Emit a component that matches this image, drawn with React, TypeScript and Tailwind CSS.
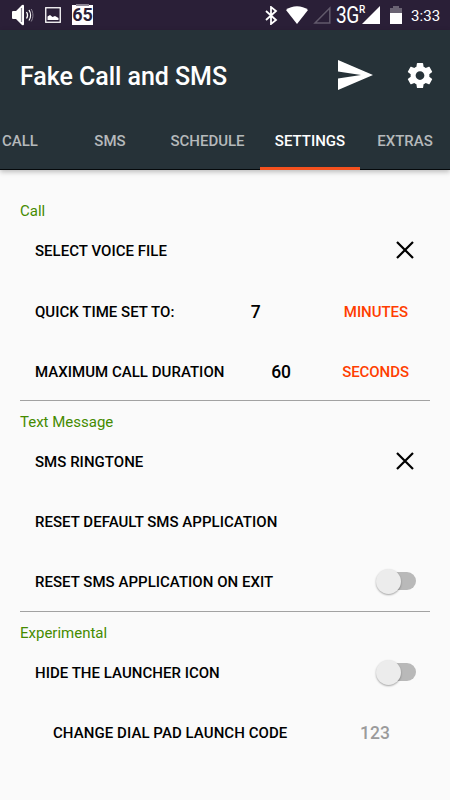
import type { ReactNode } from 'react';
import clsx from 'clsx';

interface TabItem {
  label: string;
  className: string;
  active?: boolean;
}

const tabs: TabItem[] = [
  { label: 'CALL', className: 'w-[60px] pr-5' },
  { label: 'SMS', className: 'w-[100px]' },
  { label: 'SCHEDULE', className: 'w-[95px]' },
  { label: 'SETTINGS', className: 'ml-[5px] w-[100px]', active: true },
  { label: 'EXTRAS', className: 'w-[90px]' },
];

function StatusBar() {
  return (
    <div className="flex h-[30px] items-center bg-[#2a1f37] text-white">
      <svg className="ml-3 h-[22px] w-[22px]" viewBox="0 0 22 22" fill="none">
        <path d="M0 8q0-1 1-1h3l6-6q2-1 2 1v18q0 2-2 1l-6-6H1q-1 0-1-1z" fill="#fff" />
        <path d="M9.500 4v14" stroke="#8c8694" strokeWidth="1.200" />
        <path d="M14.500 8c1.300 2 1.300 4.500 0 6.500M17 6c2 3 2 7.500 0 10.500" stroke="#fff" strokeWidth="1.300" />
        <path d="M19.200 5c2.300 4 2.300 8.500 0 12.500" stroke="#8c8694" strokeWidth="1" />
      </svg>
      <svg className="ml-[11px] h-4 w-4" viewBox="0 0 16 16" fill="none">
        <rect x="0.75" y="0.75" width="14.500" height="14.500" stroke="#fff" strokeWidth="1.300" />
        <path d="M2.500 13V9.500L5 8l2.500 2L10 9l3.500 2v2z" fill="#fff" />
      </svg>
      <div className="relative ml-[11px] flex h-5 w-[21px] items-center justify-center bg-white text-[18px] font-bold leading-none text-[#2a1f37]">
        <span className="absolute -top-[1px] left-1 h-[2px] w-[13px] bg-[#8c8694]" />
        65
      </div>

      <svg className="ml-[172px] h-[19px] w-[13px]" viewBox="0 0 13 19" fill="none">
        <path d="M1 5l10 9-5 4V1l5 4L1 14" stroke="#fff" strokeWidth="1.800" />
      </svg>
      <svg className="ml-2 h-[18px] w-[22px]" viewBox="0 0 22 18">
        <path d="M0 4C6-1 16-1 22 4L11 18z" fill="#fff" />
      </svg>
      <svg className="ml-[5px] h-[18px] w-[18px]" viewBox="0 0 18 18" fill="none">
        <path d="M2 17L16.800 2v15z" stroke="#625a6c" strokeWidth="1.500" />
      </svg>
      <div className="relative ml-[5px] h-[18px] w-[44px] leading-none">
        <span className="absolute -top-[2px] left-0 origin-left scale-x-[0.83] text-[23px] tracking-[-0.5px]">3G</span>
        <span className="absolute left-[23px] -top-[1px] text-[10px] font-medium">R</span>
        <svg className="absolute left-[26px] top-0 h-[18px] w-[18px]" viewBox="0 0 18 18">
          <path d="M0 18L18 0v18z" fill="#fff" />
        </svg>
      </div>
      <svg className="ml-[10px] h-[18px] w-3" viewBox="0 0 12 18">
        <path d="M3 0h6v2h3v5H0V2h3z" fill="#6a6373" />
        <path d="M0 7h12v11H0z" fill="#fff" />
      </svg>
      <span className="ml-[9px] mt-[2px] text-[15px] leading-none tracking-[0.1px]">3:33</span>
    </div>
  );
}

function AppBar() {
  return (
    <header className="relative h-[140px] border-b border-[#05090b] bg-[#263238] shadow-[0_2px_5px_rgba(0,0,0,0.25)]">
      <div className="flex h-[90px] items-center pl-5">
        <h1 className="mt-[3px] w-[318px] whitespace-nowrap text-[25px] font-medium tracking-[-0.05px] text-white">
          Fake Call and SMS
        </h1>
        <svg className="h-[30px] w-[35px]" viewBox="0 0 35 30">
          <path d="M0 0l35 15L0 30V18.500L23 15 0 11.500z" fill="#fff" />
        </svg>
        <svg className="ml-[32px] h-[31px] w-[30px]" viewBox="0 0 24 24" fill="#fff">
          <path d="M19.430 12.980c.04-.32.07-.64.07-.98s-.03-.66-.07-.98l2.110-1.650c.19-.15.24-.42.12-.64l-2-3.460c-.12-.22-.39-.3-.61-.22l-2.490 1c-.52-.4-1.080-.73-1.690-.98l-.38-2.650C14.460 2.180 14.250 2 14 2h-4c-.25 0-.46.18-.49.42l-.38 2.650c-.61.25-1.170.59-1.690.98l-2.490-1c-.23-.09-.49 0-.61.22l-2 3.460c-.13.22-.07.49.12.64l2.110 1.650c-.04.32-.07.65-.07.98s.03.66.07.98l-2.110 1.650c-.19.15-.24.42-.12.64l2 3.460c.12.22.39.3.61.22l2.490-1c.52.4 1.080.73 1.690.98l.38 2.650c.03.24.24.42.49.42h4c.25 0 .46-.18.49-.42l.38-2.650c.61-.25 1.170-.59 1.690-.98l2.490 1c.23.09.49 0 .61-.22l2-3.460c.12-.22.07-.49-.12-.64l-2.110-1.650zM12 15.500c-1.930 0-3.500-1.570-3.500-3.500s1.570-3.500 3.500-3.500 3.500 1.570 3.500 3.500-1.570 3.500-3.500 3.500z" />
        </svg>
      </div>
      <nav className="flex h-[50px]">
        {tabs.map((tab) => (
          <button
            key={tab.label}
            className={clsx(
              'flex h-[50px] items-center justify-center border-b-[3px] pb-[5px] text-[15px] font-medium',
              tab.active ? 'border-[#f4511e] text-white' : 'border-transparent text-[#b5b9bb]',
              tab.className
            )}
          >
            {tab.label}
          </button>
        ))}
      </nav>
    </header>
  );
}

function Section({ title, children }: { title: string; children: ReactNode }) {
  return (
    <section className="mx-5 h-[211px] border-b border-[#a2a2a2] pt-[11px] last:border-transparent">
      <h2 className="text-[15px] leading-5 text-[#458b00]">{title}</h2>
      {children}
    </section>
  );
}

function Row({ label, className, children }: { label: string; className?: string; children?: ReactNode }) {
  return (
    <div
      className={clsx(
        'flex h-[60px] items-center whitespace-nowrap pl-[15px] text-[15px] font-medium tracking-[0.03px] text-black',
        className
      )}
    >
      <span>{label}</span>
      {children}
    </div>
  );
}

function CloseIcon() {
  return (
    <svg className="mb-[2px] ml-auto mr-[16px] h-[18px] w-[18px]" viewBox="0 0 18 18" fill="none">
      <path d="M1 1l16 16M17 1L1 17" stroke="#000" strokeWidth="2.200" />
    </svg>
  );
}

function Toggle() {
  return (
    <button className="relative mb-[2px] ml-auto mr-[14px] h-[18px] w-[34px] rounded-full bg-[#b9b9b9]">
      <span className="absolute -left-[6px] -top-[3px] h-[25px] w-[25px] rounded-full bg-[#ececec] shadow-[0_1px_2px_rgba(0,0,0,0.35)]" />
    </button>
  );
}

export default function App() {
  return (
    <div className="h-[800px] w-[450px] overflow-hidden bg-[#fafafa] font-[Roboto,sans-serif]">
      <StatusBar />
      <AppBar />
      <main className="pt-5">
        <Section title="Call">
          <Row label="SELECT VOICE FILE">
            <CloseIcon />
          </Row>
          <Row label="QUICK TIME SET TO:" className="pt-[2px]">
            <span className="ml-auto w-[93px] text-[17.5px]">7</span>
            <span className="mr-[22px] tracking-[-0.05px] text-[#ff3d00]">MINUTES</span>
          </Row>
          <Row label="MAXIMUM CALL DURATION" className="pt-[2px]">
            <span className="ml-auto w-[71px] text-[17.5px]">60</span>
            <span className="mr-[21px] tracking-[-0.05px] text-[#ff3d00]">SECONDS</span>
          </Row>
        </Section>
        <Section title="Text Message">
          <Row label="SMS RINGTONE">
            <CloseIcon />
          </Row>
          <Row label="RESET DEFAULT SMS APPLICATION" />
          <Row label="RESET SMS APPLICATION ON EXIT">
            <Toggle />
          </Row>
        </Section>
        <Section title="Experimental">
          <Row label="HIDE THE LAUNCHER ICON">
            <Toggle />
          </Row>
          <Row label="CHANGE DIAL PAD LAUNCH CODE" className="pl-[33px] tracking-[0.07px]">
            <span className="ml-auto mr-10 text-[17.5px] text-[#9b9b9b]">123</span>
          </Row>
        </Section>
      </main>
    </div>
  );
}
